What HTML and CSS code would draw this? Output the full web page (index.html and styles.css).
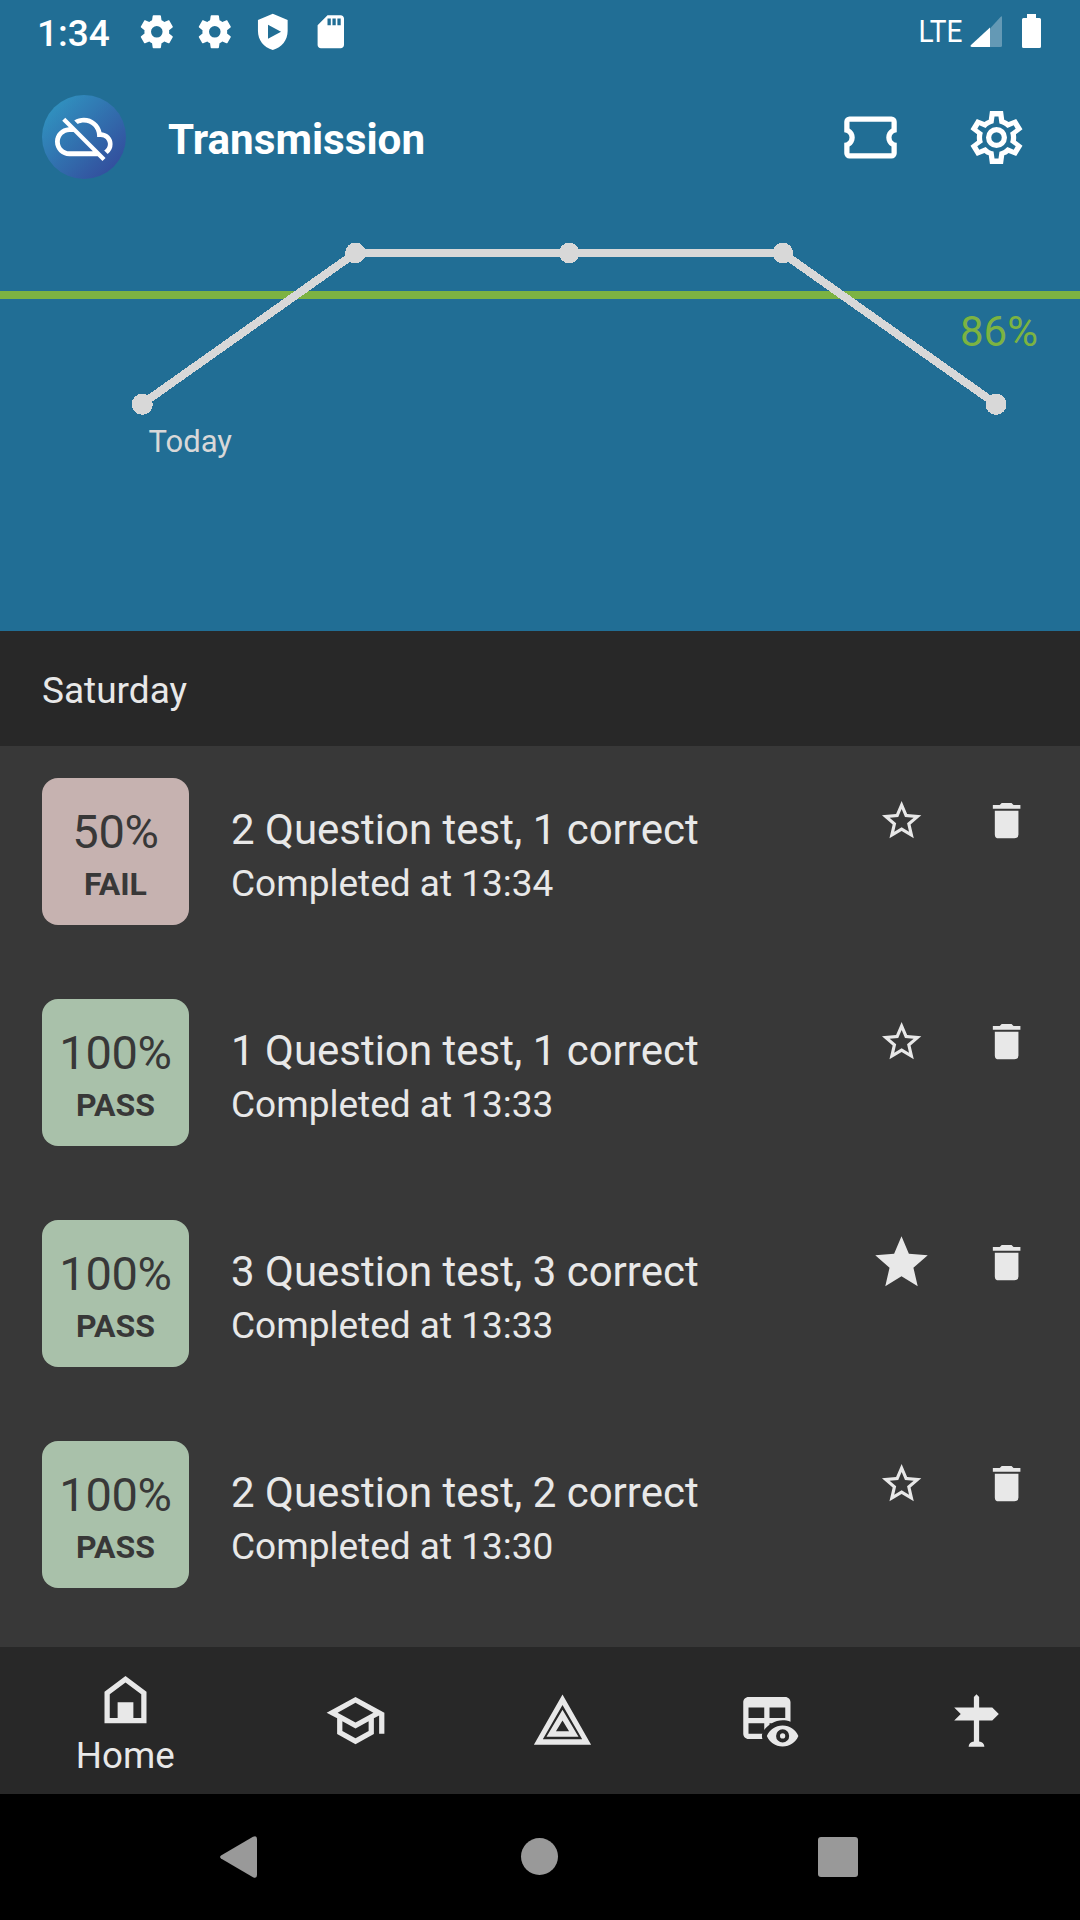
FILE: index.html
```html
<!DOCTYPE html>
<html lang="en">
<head>
<meta charset="utf-8">
<title>Transmission</title>
<link rel="stylesheet" href="styles.css">
</head>
<body>
<svg class="sprite" aria-hidden="true">
  <symbol id="cog" viewBox="0 0 24 24"><path d="M12,15.5A3.5,3.5 0 0,1 8.5,12A3.5,3.5 0 0,1 12,8.5A3.5,3.5 0 0,1 15.5,12A3.5,3.5 0 0,1 12,15.5M19.43,12.97C19.47,12.65 19.5,12.33 19.5,12C19.5,11.67 19.47,11.34 19.43,11L21.54,9.37C21.73,9.22 21.78,8.95 21.66,8.73L19.66,5.27C19.54,5.05 19.27,4.96 19.05,5.05L16.56,6.05C16.04,5.66 15.5,5.32 14.87,5.07L14.5,2.42C14.46,2.18 14.25,2 14,2H10C9.75,2 9.54,2.18 9.5,2.42L9.13,5.07C8.5,5.32 7.96,5.66 7.44,6.05L4.95,5.05C4.73,4.96 4.46,5.05 4.34,5.27L2.34,8.73C2.21,8.95 2.27,9.22 2.46,9.37L4.57,11C4.53,11.34 4.5,11.67 4.5,12C4.5,12.33 4.53,12.65 4.57,12.97L2.46,14.63C2.27,14.78 2.21,15.05 2.34,15.27L4.34,18.73C4.46,18.95 4.73,19.03 4.95,18.95L7.44,17.94C7.96,18.34 8.5,18.68 9.13,18.93L9.5,21.58C9.54,21.82 9.75,22 10,22H14C14.25,22 14.46,21.82 14.5,21.58L14.87,18.93C15.5,18.67 16.04,18.34 16.56,17.94L19.05,18.95C19.27,19.03 19.54,18.95 19.66,18.73L21.66,15.27C21.78,15.05 21.73,14.78 21.54,14.63L19.43,12.97Z"/></symbol>
  <symbol id="shield" viewBox="0 0 24 24"><path fill-rule="evenodd" d="M12 1L3 4.8V11.500C3 17 6.500 21.500 12 23C17.500 21.500 21 17 21 11.500V4.800ZM9.100 7.800L17 12L9.100 16.200Z"/></symbol>
  <symbol id="sd" viewBox="0 0 24 24"><path d="M18 2h-8L4 8v12c0 1.100.9 2 2 2h12c1.100 0 2-.9 2-2V4c0-1.100-.9-2-2-2zm-6 6h-2V4h2v4zm3 0h-2V4h2v4zm3 0h-2V4h2v4z"/></symbol>
  <symbol id="cloud-off" viewBox="0 0 24 24"><path d="M19.35 10.04C18.67 6.590 15.640 4 12 4c-1.480 0-2.850.43-4.010 1.170l1.460 1.460C10.210 6.230 11.080 6 12 6c3.040 0 5.500 2.460 5.500 5.500v.5H19c1.660 0 3 1.340 3 3 0 1.130-.64 2.110-1.560 2.620l1.450 1.450C23.160 18.160 24 16.680 24 15c0-2.640-2.050-4.780-4.650-4.960zM3 5.270l2.750 2.740C2.560 8.150 0 10.770 0 14c0 3.310 2.690 6 6 6h11.730l2 2L21 20.730 4.270 4 3 5.270zM7.730 10l8 8H6c-2.210 0-4-1.790-4-4s1.790-4 4-4h1.730z"/></symbol>
  <symbol id="ticket" viewBox="0 0 24 24"><path d="M4,4A2,2 0 0,0 2,6V10A2,2 0 0,1 4,12A2,2 0 0,1 2,14V18A2,2 0 0,0 4,20H20A2,2 0 0,0 22,18V14A2,2 0 0,1 20,12A2,2 0 0,1 22,10V6A2,2 0 0,0 20,4H4M4,6H20V8.540C18.760,9.250 18,10.570 18,12C18,13.430 18.760,14.750 20,15.460V18H4V15.460C5.240,14.750 6,13.430 6,12C6,10.570 5.240,9.250 4,8.540V6Z"/></symbol>
  <symbol id="cog-outline" viewBox="0 0 24 24"><path fill-rule="evenodd" d="M9.500 1.950H14.500L14.950 5.200Q15.850 5.500 16.600 6.100L19.500 4.950L21.900 8.900L19.400 10.750Q19.600 12 19.400 13.250L21.900 15.100L19.500 19.050L16.600 17.900Q15.850 18.500 14.950 18.800L14.500 22.050H9.500L9.050 18.800Q8.150 18.500 7.400 17.900L4.500 19.050L2.100 15.100L4.600 13.250Q4.400 12 4.600 10.750L2.100 8.900L4.500 4.950L7.400 6.100Q8.150 5.500 9.050 5.200ZM11.250,4L10.880,6.610C9.680,6.860 8.620,7.500 7.850,8.390L5.440,7.350L4.690,8.650L6.800,10.200C6.400,11.370 6.400,12.640 6.800,13.800L4.680,15.360L5.430,16.660L7.860,15.620C8.630,16.500 9.680,17.140 10.870,17.380L11.240,20H12.760L13.130,17.390C14.320,17.140 15.370,16.500 16.140,15.620L18.570,16.660L19.320,15.360L17.200,13.810C17.600,12.640 17.600,11.370 17.200,10.200L19.310,8.650L18.560,7.350L16.150,8.390C15.380,7.500 14.320,6.860 13.120,6.620L12.750,4ZM12 8A4 4 0 0 1 12 16A4 4 0 0 1 12 8ZM12 10A2 2 0 0 0 12 14A2 2 0 0 0 12 10Z"/></symbol>
  <symbol id="star-outline" viewBox="0 0 24 24"><path d="M12,15.390L8.240,17.660L9.230,13.380L5.910,10.500L10.290,10.130L12,6.090L13.710,10.130L18.090,10.500L14.770,13.380L15.760,17.660M22,9.240L14.810,8.630L12,2L9.190,8.630L2,9.240L7.450,13.970L5.820,21L12,17.270L18.180,21L16.540,13.970L22,9.240Z"/></symbol>
  <symbol id="star" viewBox="0 0 24 24"><path d="M12,17.270L18.180,21L16.540,13.970L22,9.240L14.810,8.620L12,2L9.190,8.620L2,9.240L7.450,13.970L5.820,21L12,17.270Z"/></symbol>
  <symbol id="trash" viewBox="0 0 24 24"><path d="M19,4H15.500L14.500,3H9.500L8.500,4H5V6H19M6,19A2,2 0 0,0 8,21H16A2,2 0 0,0 18,19V7H6V19Z"/></symbol>
  <symbol id="home" viewBox="0 0 24 24"><path fill-rule="evenodd" d="M4 21V9L12 3L20 9V21ZM6 10V19H9V13H15V19H18V10L12 5.500Z"/></symbol>
  <symbol id="school" viewBox="0 0 24 24"><path d="M12 3L1 9L5 11.180V17.180L12 21L19 17.180V11.180L21 10.090V17H23V9L12 3M18.820 9L12 12.720L5.180 9L12 5.280L18.820 9M17 16L12 18.720L7 16V12.270L12 15L17 12.270V16Z"/></symbol>
  <symbol id="hazard" viewBox="0 0 24 24"><path fill-rule="evenodd" d="M12 2.050L22.900 21.200H1.100ZM12 6.050L4.500 19.100H19.500ZM12 7.900L18.100 18.200H5.900ZM12 12L9.500 16.100H14.500Z"/></symbol>
  <symbol id="table-eye" viewBox="0 0 24 24"><path fill-rule="evenodd" d="M18 3H4C2.900 3 2 3.900 2 5V17C2 18.100 2.900 19 4 19H9.300C9.050 18.250 9.050 17.500 9.300 16.800V17H4V13H10V15.600C10.500 14.900 11.200 14.200 12 13.600V13H12.900C14.900 11.800 17.600 11.500 20 12.450V5C20 3.900 19.100 3 18 3ZM4 7H10V11H4ZM12 7H18V11H12ZM17 13.880C19.730 13.880 22.060 15.540 23 17.880C22.060 20.220 19.730 21.880 17 21.880S11.940 20.220 11 17.880C11.940 15.540 14.270 13.880 17 13.880ZM17 15.380A2.500 2.500 0 0 0 17 20.380A2.500 2.500 0 0 0 17 15.380ZM17 16.880A1 1 0 0 1 17 18.880A1 1 0 0 1 17 16.880Z"/></symbol>
  <symbol id="signpost" viewBox="0 0 24 24"><path d="M11,12H3.500L6,9.500L3.500,7H11V3L12,2L13,3V7H18L20.500,9.500L18,12H13V20A2,2 0 0,1 15,22H9A2,2 0 0,1 11,20V12Z"/></symbol>
</svg>

<div class="screen">
  <section class="hero">
    <div class="status-bar">
      <span class="clock">1:34</span>
      <div class="notifications">
        <svg class="icon-status"><use href="#cog"/></svg>
        <svg class="icon-status"><use href="#cog"/></svg>
        <svg class="icon-status"><use href="#shield"/></svg>
        <svg class="icon-status"><use href="#sd"/></svg>
      </div>
      <svg class="connectivity" viewBox="0 0 124 40">
        <text class="lte" x="-.5" y="30" textLength="44" lengthAdjust="spacingAndGlyphs">LTE</text>
        <path fill-opacity=".3" d="M71 16.500L81.500 5Q83 3.500 83 5.500V33.500Q83 35 81.500 35H71Z"/>
        <path d="M71 15.500V35H53Q50.500 34.500 52 33Z"/>
        <path d="M108 2H117V6H120.500Q122 6 122 7.500V34.500Q122 36 120.500 36H104.500Q103 36 103 34.500V7.500Q103 6 104.500 6H108Z"/>
      </svg>
    </div>
    <header class="toolbar">
      <span class="avatar"><svg class="icon-cloud"><use href="#cloud-off"/></svg></span>
      <h1 class="title">Transmission</h1>
      <div class="toolbar-actions">
        <svg class="icon"><use href="#ticket"/></svg>
        <svg class="icon"><use href="#cog-outline"/></svg>
      </div>
    </header>
    <svg class="chart" viewBox="0 211 1080 420">
      <g shape-rendering="crispEdges">
        <path class="pass-mark" d="M0 295H1080"/>
        <path class="series" d="M142 404L355.500 253H782.500L996 404"/>
        <g class="points">
          <circle cx="142.300" cy="404.300" r="10.500"/>
          <circle cx="355.500" cy="253" r="10.300"/>
          <circle cx="569.200" cy="253" r="10.300"/>
          <circle cx="782.800" cy="253" r="10.300"/>
          <circle cx="996" cy="404.300" r="10.500"/>
        </g>
      </g>
      <text class="pass-label" x="1038" y="346" text-anchor="end">86%</text>
      <text class="day-label" x="148.500" y="452">Today</text>
    </svg>
  </section>

  <h2 class="day">Saturday</h2>

  <main class="results">
    <article class="result">
      <div class="badge fail"><span class="score">50%</span><span class="verdict">FAIL</span></div>
      <div class="info"><div class="name">2 Question test, 1 correct</div><div class="time">Completed at 13:34</div></div>
      <div class="actions"><span class="action"><svg class="icon-small"><use href="#star-outline"/></svg></span><span class="action"><svg class="icon-small"><use href="#trash"/></svg></span></div>
    </article>
    <article class="result">
      <div class="badge"><span class="score">100%</span><span class="verdict">PASS</span></div>
      <div class="info"><div class="name">1 Question test, 1 correct</div><div class="time">Completed at 13:33</div></div>
      <div class="actions"><span class="action"><svg class="icon-small"><use href="#star-outline"/></svg></span><span class="action"><svg class="icon-small"><use href="#trash"/></svg></span></div>
    </article>
    <article class="result">
      <div class="badge"><span class="score">100%</span><span class="verdict">PASS</span></div>
      <div class="info"><div class="name">3 Question test, 3 correct</div><div class="time">Completed at 13:33</div></div>
      <div class="actions"><span class="action"><svg class="icon"><use href="#star"/></svg></span><span class="action"><svg class="icon-small"><use href="#trash"/></svg></span></div>
    </article>
    <article class="result">
      <div class="badge"><span class="score">100%</span><span class="verdict">PASS</span></div>
      <div class="info"><div class="name">2 Question test, 2 correct</div><div class="time">Completed at 13:30</div></div>
      <div class="actions"><span class="action"><svg class="icon-small"><use href="#star-outline"/></svg></span><span class="action"><svg class="icon-small"><use href="#trash"/></svg></span></div>
    </article>
  </main>

  <nav class="tabs">
    <div class="tab active"><svg class="icon"><use href="#home"/></svg><span>Home</span></div>
    <div class="tab"><svg class="icon"><use href="#school"/></svg></div>
    <div class="tab"><svg class="icon"><use href="#hazard"/></svg></div>
    <div class="tab"><svg class="icon"><use href="#table-eye"/></svg></div>
    <div class="tab"><svg class="icon"><use href="#signpost"/></svg></div>
  </nav>

  <div class="system-nav">
    <svg class="system-back" viewBox="0 0 37 42"><path d="M1 19.500L33 .8Q37-1 37 3V39Q37 43 33 41.200L1 22.500Q-.8 21 1 19.500Z"/></svg>
    <span class="system-home"></span>
    <span class="system-recent"></span>
  </div>
</div>
</body>
</html>
```

FILE: styles.css
```css
* {
  box-sizing: border-box;
}

body {
  margin: 0;
  font-family: Roboto, "Noto Sans", sans-serif;
  background: #000;
}

h1,
h2 {
  margin: 0;
}

svg {
  display: block;
  fill: currentColor;
  flex: none;
}

.sprite {
  display: none;
}

.screen {
  display: flex;
  flex-direction: column;
  width: 1080px;
  height: 1920px;
  overflow: hidden;
  color: #e8e8e8;
  background: #383838;
}

.icon {
  width: 63px;
  height: 63px;
}

.icon-small {
  width: 47.25px;
  height: 47.25px;
}

/* Header and score chart */
.hero {
  flex: none;
  height: 631px;
  color: #fff;
  background: #216e95;
}

.status-bar {
  display: flex;
  align-items: center;
  height: 63px;
  padding: 0 37px;
}

.clock {
  width: 100.300px;
  font-size: 37px;
  font-weight: 500;
  line-height: 63px;
  padding-top: 3px;
}

.notifications {
  display: flex;
  flex: 1;
  gap: 18.400px;
}

.icon-status {
  width: 39.600px;
  height: 39.600px;
}

.connectivity {
  width: 124px;
  height: 40px;
  overflow: visible;
}

.lte {
  font-size: 32px;
  font-weight: 400;
}

.toolbar {
  display: flex;
  align-items: center;
  height: 148px;
  padding: 0 52px 0 42px;
}

.avatar {
  display: flex;
  align-items: center;
  justify-content: center;
  width: 84px;
  height: 84px;
  border-radius: 50%;
  background: linear-gradient(135deg, #3093c0 10%, #334c9c 90%);
}

.icon-cloud {
  width: 57.750px;
  height: 57.750px;
}

.title {
  flex: 1;
  padding: 6px 0 0 42px;
  font-size: 42.200px;
  font-weight: 700;
  line-height: 50px;
}

.toolbar-actions {
  display: flex;
  gap: 63px;
}

.chart {
  width: 1080px;
  height: 420px;
}

.pass-mark {
  stroke: #7cb342;
  stroke-width: 8px;
}

.series {
  fill: none;
  stroke: #d8d8d8;
  stroke-width: 8px;
}

.points,
.day-label {
  fill: #d8d8d8;
}

.day-label {
  font-size: 31px;
}

.pass-label {
  font-size: 42px;
  fill: #7cb342;
}

/* Result list */
.day {
  flex: none;
  height: 115px;
  padding: 2px 42px 0;
  font-size: 37px;
  font-weight: 400;
  line-height: 115px;
  background: #282828;
}

.results {
  flex: 1;
  min-height: 0;
  overflow: hidden;
}

.result {
  display: flex;
  height: 221px;
  padding: 32px 21px 0 42px;
}

.badge {
  display: flex;
  flex-direction: column;
  align-items: center;
  gap: 6px;
  width: 147px;
  height: 147px;
  padding-top: 26px;
  border-radius: 16px;
  color: #383838;
  background: #a9c1aa;
}

.badge.fail {
  background: #c6b2b0;
}

.score {
  font-size: 47px;
  letter-spacing: -.3px;
  line-height: 56px;
}

.verdict {
  font-size: 32px;
  font-weight: 700;
  line-height: 37px;
}

.info {
  flex: 1;
  padding: 27px 0 0 42px;
}

.name {
  margin-bottom: 7px;
  font-size: 42px;
  line-height: 50px;
}

.time {
  font-size: 37px;
  line-height: 44px;
}

.actions {
  display: flex;
}

.action {
  display: flex;
  align-items: center;
  justify-content: center;
  width: 105px;
  height: 85.500px;
}

/* Bottom tabs */
.tabs {
  display: flex;
  flex: none;
  height: 147px;
  background: #282828;
}

.tab {
  display: flex;
  flex: 1;
  flex-direction: column;
  align-items: center;
  justify-content: center;
}

.tab.active {
  flex: none;
  width: 252.500px;
  justify-content: flex-start;
  padding: 21px 2px 0 0;
  font-size: 36.750px;
  line-height: 44px;
}

.tab.active span {
  margin-top: 3px;
}

/* Device navigation */
.system-nav {
  display: flex;
  flex: none;
  align-items: center;
  height: 126px;
  padding-left: 220px;
  color: #999;
  background: #000;
}

.system-back {
  width: 37px;
  height: 42px;
}

.system-home {
  width: 37px;
  height: 37px;
  margin: 0 260px 1px 264px;
  border-radius: 50%;
  background: currentColor;
}

.system-recent {
  width: 40px;
  height: 40px;
  border-radius: 3px;
  background: currentColor;
}
```
